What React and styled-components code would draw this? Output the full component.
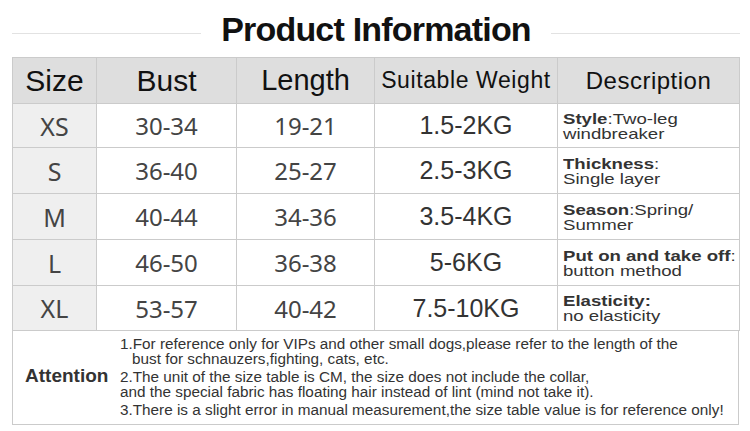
import React from 'react';
import styled, { createGlobalStyle } from 'styled-components';

const GlobalStyle = createGlobalStyle`
  html, body {
    margin: 0;
    padding: 0;
    background: #fff;
  }
  body {
    font-family: 'Liberation Sans', Arial, sans-serif;
    color: #333;
  }
`;

const sizes = [
    { size: 'XS', bust: '30-34', length: '19-21', weight: '1.5-2KG', label: 'Style', rest: ':Two-leg', second: 'windbreaker' },
    { size: 'S', bust: '36-40', length: '25-27', weight: '2.5-3KG', label: 'Thickness', rest: ':', second: 'Single layer' },
    { size: 'M', bust: '40-44', length: '34-36', weight: '3.5-4KG', label: 'Season', rest: ':Spring/', second: 'Summer' },
    { size: 'L', bust: '46-50', length: '36-38', weight: '5-6KG', label: 'Put on and take off', rest: ':', second: 'button method' },
    { size: 'XL', bust: '53-57', length: '40-42', weight: '7.5-10KG', label: 'Elasticity:', rest: '', second: 'no elasticity' },
];

const notes = [
    [
        '1.For reference only for VIPs and other small dogs,please refer to the length of the',
        'bust for schnauzers,fighting, cats, etc.',
    ],
    [
        '2.The unit of the size table is CM, the size does not include the collar,',
        'and the special fabric has floating hair instead of lint (mind not take it).',
    ],
    ['3.There is a slight error in manual measurement,the size table value is for reference only!'],
];

export default function App() {
    return (
        <Page>
            <GlobalStyle />
            <TitleRow>
                <Rule />
                <Title>Product Information</Title>
                <Rule />
            </TitleRow>

            <Table>
                <HeadCell size={30}>Size</HeadCell>
                <HeadCell size={30}>Bust</HeadCell>
                <HeadCell size={29}>Length</HeadCell>
                <HeadCell size={23} spacing={0.6}>Suitable Weight</HeadCell>
                <HeadCell size={24} spacing={0.5}>Description</HeadCell>

                {sizes.map(row => (
                    <React.Fragment key={row.size}>
                        <SizeCell>{row.size}</SizeCell>
                        <NumberCell>{row.bust}</NumberCell>
                        <NumberCell>{row.length}</NumberCell>
                        <WeightCell>{row.weight}</WeightCell>
                        <DescCell>
                            <DescLine>
                                <b>{row.label}</b>{row.rest}
                            </DescLine>
                            <DescLine>{row.second}</DescLine>
                        </DescCell>
                    </React.Fragment>
                ))}
            </Table>

            <Attention>
                <AttentionLabel>Attention</AttentionLabel>
                <Notes>
                    {notes.map((lines, i) => (
                        <Note key={i}>
                            {lines.map((line, j) => (
                                <NoteLine key={j} indent={i === 0 && j > 0}>{line}</NoteLine>
                            ))}
                        </Note>
                    ))}
                </Notes>
            </Attention>
        </Page>
    );
}

const Page = styled.div`
    width: 750px;
    height: 431px;
    padding: 0 10px 0 12px;
    box-sizing: border-box;
    overflow: hidden;
`;

const TitleRow = styled.div`
    display: flex;
    align-items: center;
    height: 57px;
`;

const Rule = styled.div`
    flex: 1;
    height: 1px;
    margin-top: 10px;
    background: #e2e2e2;
`;

const Title = styled.h1`
    margin: 0 20px;
    font-size: 34px;
    line-height: 34px;
    font-weight: bold;
    letter-spacing: -0.8px;
    color: #111;
`;

const Table = styled.div`
    display: grid;
    grid-template-columns: 83px 139px 137px 182px 181px;
    grid-template-rows: 45px 43px 45px 45px 45px 44px;
    gap: 1px;
    width: max-content;
    border: 1px solid #cbcbcb;
    background: #cbcbcb;
`;

const Cell = styled.div`
    display: flex;
    align-items: center;
    justify-content: center;
    background: #fff;
    white-space: nowrap;
`;

const HeadCell = styled(Cell)`
    background: #dedede;
    color: #111;
    font-size: ${props => props.size}px;
    letter-spacing: ${props => props.spacing || 0}px;
`;

const NumberCell = styled(Cell)`
    font-family: 'Noto Sans', sans-serif;
    font-size: 24px;
    color: #444;
`;

const SizeCell = styled(NumberCell)`
    background: #efefef;
    font-size: 25px;
`;

const WeightCell = styled(Cell)`
    font-size: 25px;
    color: #333;
`;

const DescCell = styled(Cell)`
    flex-direction: column;
    align-items: flex-start;
    padding-left: 5px;
    color: #333;
`;

const DescLine = styled.div`
    font-size: 15px;
    line-height: 15px;
    transform: scaleX(1.24);
    transform-origin: left center;
`;

const Attention = styled.div`
    display: flex;
    align-items: center;
    width: 727px;
    height: 94px;
    box-sizing: border-box;
    border: 1px solid #cbcbcb;
    border-top: none;
`;

const AttentionLabel = styled.div`
    flex: 0 0 107px;
    padding-left: 12px;
    box-sizing: border-box;
    font-size: 19px;
    font-weight: bold;
    color: #333;
    margin-top: -4px;
`;

const Notes = styled.div`
    display: flex;
    flex-direction: column;
    gap: 3px;
    margin-top: -3px;
`;

const Note = styled.div`
    display: flex;
    flex-direction: column;
`;

const NoteLine = styled.div`
    font-size: 15.3px;
    line-height: 15px;
    color: #333;
    white-space: nowrap;
    padding-left: ${props => props.indent ? '12px' : '0'};
`;
